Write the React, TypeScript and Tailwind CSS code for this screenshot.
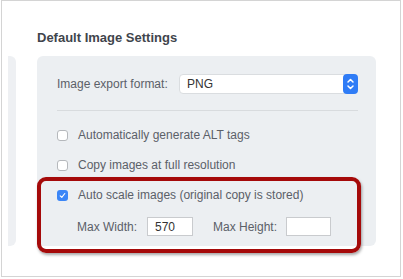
import React from 'react';

const font = { fontFamily: '"Liberation Sans", Arial, sans-serif' };

function Checkbox({ checked = false }: { checked?: boolean }) {
  if (checked) {
    return (
      <span className="flex h-[11px] w-[11px] items-center justify-center rounded-[3px] bg-[#3b86f7]">
        <svg width="7" height="7" viewBox="0 0 7 7">
          <path d="M1.2 3.8 L2.8 5.3 L5.8 1.5" fill="none" stroke="white" strokeWidth="1.1" strokeLinecap="round" strokeLinejoin="round" />
        </svg>
      </span>
    );
  }
  return <span className="h-[11px] w-[11px] rounded-[3px] border border-[#b5b8bc] bg-white" />;
}

function CheckRow({ label, checked }: { label: string; checked?: boolean }) {
  return (
    <div className="flex h-[30px] items-center gap-[10px]">
      <Checkbox checked={checked} />
      <span>{label}</span>
    </div>
  );
}

export default function App() {
  return (
    <div className="relative h-[279px] w-[403px] overflow-hidden bg-white text-[12px] text-[#5b6068]" style={font}>
      <div className="ml-px h-[277px] w-[400px] border border-[#d4d4d4] bg-white">
        <div className="pl-[35px] pt-[28px] text-[13px] font-bold leading-[17px] text-[#3f454c]">Default Image Settings</div>
        <div className="mt-[10px] flex items-start">
          <div className="ml-[6px] h-[190px] w-[8px] rounded-r-[6px] bg-[#eef0f3]" />
          <div className="ml-[21px] h-[190px] w-[339px] rounded-[6px] bg-[#eceff2] pl-[20px] pr-[18px] pt-[18px]">
            <div className="flex h-[20px] items-center">
              <span className="w-[122px]">Image export format:</span>
              <div className="flex h-[20px] flex-1 items-center justify-between rounded-[4px] border border-[#dadde0] bg-white pl-[7px]">
                <span className="text-[#333]">PNG</span>
                <span className="-mr-px flex h-[20px] w-[15px] items-center justify-center rounded-[4px] bg-[#2f7cf6]">
                  <svg width="9" height="14" viewBox="0 0 9 14">
                    <path d="M2 5 L4.5 2.5 L7 5 M2 9 L4.5 11.5 L7 9" fill="none" stroke="white" strokeWidth="1.5" strokeLinecap="round" strokeLinejoin="round" />
                  </svg>
                </span>
              </div>
            </div>
            <div className="mt-[16px] h-px bg-[#d8dbde]" />
            <div className="mt-[9px]">
              <CheckRow label="Automatically generate ALT tags" />
              <CheckRow label="Copy images at full resolution" />
              <CheckRow label="Auto scale images (original copy is stored)" checked />
            </div>
            <div className="mt-[7px] flex h-[19px] items-center pl-[20px]">
              <span className="w-[70px]">Max Width:</span>
              <span className="flex h-[19px] w-[46px] items-center border border-[#c9cbce] bg-white pl-[7px] text-[#333]">570</span>
              <span className="ml-[20px] w-[73px]">Max Height:</span>
              <span className="h-[19px] w-[45px] border border-[#c9cbce] bg-white" />
            </div>
          </div>
        </div>
      </div>
      <div className="absolute left-[37px] top-[177px] h-[76px] w-[324px] rounded-[9px] border-[4px] border-[#a50a0a] shadow-[1px_2px_3px_rgba(0,0,0,0.35)]" />
    </div>
  );
}
